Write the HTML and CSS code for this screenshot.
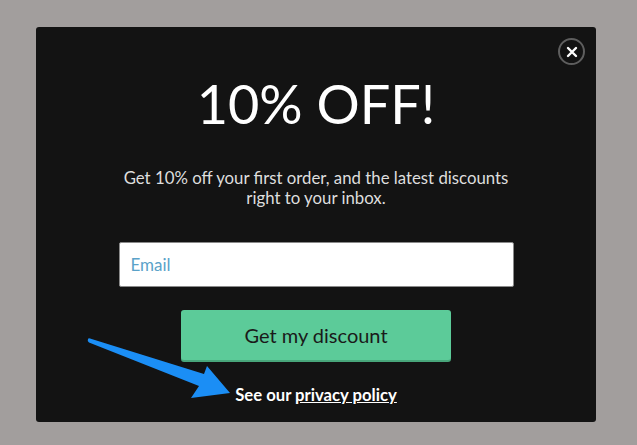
FILE: index.html
```html
<!DOCTYPE html>
<html lang="en">

<head>
    <meta charset="UTF-8">
    <meta name="viewport" content="width=device-width, initial-scale=1.0">
    <title>10% OFF - Popup</title>
    <link rel="stylesheet" href="styles.css">
</head>

<body>

    <div class="modal">
        <!-- Cerrar -->
        <button class="close" type="button" aria-label="Close">
            <svg width="12" height="12" viewBox="0 0 12 12">
                <path d="M2 2 L10 10 M10 2 L2 10" stroke="#ffffff" stroke-width="2.4" stroke-linecap="round" />
            </svg>
        </button>

        <h1>10% OFF!</h1>
        <p class="intro">Get 10% off your first order, and the latest discounts<br>right to your inbox.</p>

        <form class="signup">
            <input type="email" class="email" placeholder="Email">
            <button type="submit" class="submit">Get my discount</button>
        </form>

        <div class="privacy">See our <a href="#">privacy policy</a></div>

        <!-- Flecha de anotacion -->
        <svg class="arrow" width="150" height="66" viewBox="0 0 150 66">
            <path d="M1 9 Q0 11 2 12.5 L112 56 L104 68 L143 63 L120 36 L117 44 L3 8.5 Q1.5 8 1 9 Z" fill="#1b8ef5" transform="translate(0,-2)" />
        </svg>
    </div>

</body>

</html>
```

FILE: styles.css
```css
body {
    font-family: Lato, "Open Sans", sans-serif;
    background-color: #a29e9d;
    margin: 0;
    padding: 27px 0 0 36px;
    height: 100vh;
    box-sizing: border-box;
}

.modal {
    position: relative;
    width: 560px;
    height: 395px;
    background-color: #131313;
    border-radius: 3px;
    box-sizing: border-box;
    padding-top: 46px;
    display: flex;
    flex-direction: column;
    align-items: center;
}

.close {
    position: absolute;
    top: 11px;
    right: 11px;
    width: 27px;
    height: 27px;
    border-radius: 50%;
    border: 2px solid #5e5e5e;
    background: transparent;
    padding: 0;
    display: flex;
    justify-content: center;
    align-items: center;
    cursor: pointer;
}

h1 {
    font-size: 54px;
    font-weight: 400;
    color: #ffffff;
    margin: 0;
    line-height: 62px;
}

.intro {
    font-size: 16.8px;
    line-height: 20px;
    color: #dedede;
    text-align: center;
    margin: 33px 0 0;
}

.signup {
    display: flex;
    flex-direction: column;
    align-items: center;
    margin-top: 34px;
}

.email {
    width: 395px;
    height: 45px;
    box-sizing: border-box;
    border: 1px solid #8a8a8a;
    border-radius: 2px;
    padding: 0 11px;
    font-family: Lato, sans-serif;
    font-size: 17px;
    color: #333;
    background: #ffffff;
}

.email::placeholder {
    color: #5aa2c9;
}

.submit {
    margin-top: 23px;
    width: 270px;
    height: 50px;
    border: none;
    border-radius: 3px;
    background-color: #5ccb99;
    box-shadow: 0 2px 0 #48a67b;
    font-family: Lato, sans-serif;
    font-size: 20px;
    color: #1a1a1a;
    cursor: pointer;
}

.privacy {
    margin-top: 25px;
    font-size: 16.7px;
    font-weight: 700;
    color: #ffffff;
}

.privacy a {
    color: #ffffff;
    text-decoration: underline;
}

.arrow {
    position: absolute;
    left: 51px;
    top: 305px;
}
```
